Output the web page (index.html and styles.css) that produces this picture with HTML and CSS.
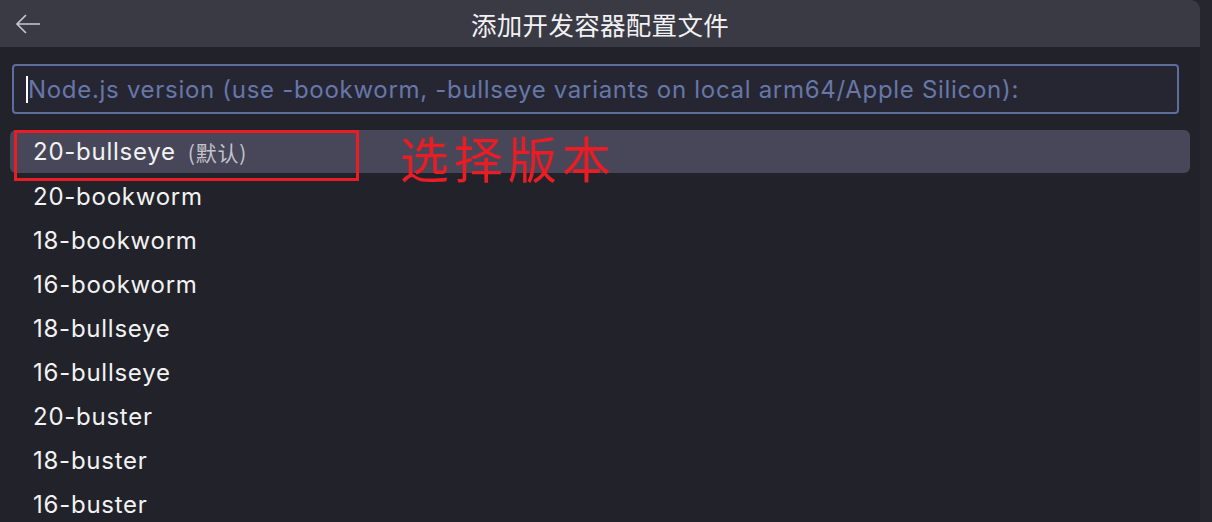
FILE: index.html
```html
<!DOCTYPE html>
<html>
<head>
<meta charset="utf-8">
<link rel="stylesheet" href="styles.css">
</head>
<body>
<div class="screen">
  <div class="panel">
    <div class="titlebar">
      <span class="back">
        <svg width="26" height="22" viewBox="0 0 26 22"><path d="M25 11H2M11 2L2 11l9 9" fill="none" stroke="#c9c9cc" stroke-width="1.6"/></svg>
      </span>
      <span class="title">添加开发容器配置文件</span>
    </div>
    <div class="body">
      <div class="input">
        <span class="caret"></span>
        <span class="placeholder">Node.js version (use -bookworm, -bullseye variants on local arm64/Apple Silicon):</span>
      </div>
      <ul class="list">
        <li class="item selected">
          <span class="label">20-bullseye</span><span class="desc">(默认)</span>
          <span class="mark"></span>
          <span class="note">选择版本</span>
        </li>
        <li class="item"><span class="label">20-bookworm</span></li>
        <li class="item"><span class="label">18-bookworm</span></li>
        <li class="item"><span class="label">16-bookworm</span></li>
        <li class="item"><span class="label">18-bullseye</span></li>
        <li class="item"><span class="label">16-bullseye</span></li>
        <li class="item"><span class="label">20-buster</span></li>
        <li class="item"><span class="label">18-buster</span></li>
        <li class="item"><span class="label">16-buster</span></li>
      </ul>
    </div>
  </div>
  <div class="strip"></div>
</div>
</body>
</html>
```

FILE: styles.css
```css
html, body {
  margin: 0;
  padding: 0;
  background: #25252d;
}
.screen {
  display: flex;
  width: 1212px;
  height: 522px;
  overflow: hidden;
  font-family: Inter, "Noto Sans CJK SC", sans-serif;
}
.panel {
  width: 1200px;
  background: #22222b;
  border-top-right-radius: 9px;
  overflow: hidden;
}
.strip {
  flex: 1;
  background: #26262e;
}
.titlebar {
  position: relative;
  height: 47px;
  background: #3a3a44;
  display: flex;
  align-items: center;
  justify-content: center;
}
.back {
  position: absolute;
  left: 15px;
  top: 13px;
  display: flex;
}
.title {
  color: #f1f1f3;
  font-size: 25.5px;
  font-family: "Noto Sans CJK SC", sans-serif;
  letter-spacing: 0.3px;
}
.body {
  padding: 17px 10px 0 10px;
}
.input {
  box-sizing: border-box;
  margin: 0 11px 0 2px;
  height: 50px;
  border: 2px solid #5c6d9e;
  border-radius: 4px;
  background: #262633;
  display: flex;
  align-items: center;
  padding-left: 12px;
}
.caret {
  width: 2px;
  height: 27px;
  background: #ffffff;
}
.placeholder {
  color: #6677a8;
  font-size: 24px;
  letter-spacing: 0.7px;
}
.list {
  list-style: none;
  margin: 16px 0 0 0;
  padding: 0;
}
.item {
  position: relative;
  height: 44px;
  display: flex;
  align-items: center;
  padding-left: 23px;
  color: #f2f2f2;
  font-size: 24px;
  font-weight: 400;
  letter-spacing: 0.75px;
  border-radius: 6px;
}
.item.selected {
  height: 43px;
  margin-bottom: 1px;
  background: #474759;
}
.desc {
  color: #c4c4cc;
  font-size: 21px;
  font-weight: 400;
  margin-left: 12px;
  letter-spacing: 0.8px;
  font-family: "Noto Sans CJK SC", sans-serif;
}
.mark {
  position: absolute;
  box-sizing: border-box;
  left: 4px;
  top: 0;
  width: 345px;
  height: 51px;
  border: 3.5px solid #ea1c24;
}
.note {
  position: absolute;
  left: 390px;
  top: -2px;
  color: #ea1c24;
  font-size: 49px;
  font-weight: 400;
  line-height: 58px;
  font-family: "Noto Sans CJK SC", sans-serif;
  letter-spacing: 5px;
}
```
